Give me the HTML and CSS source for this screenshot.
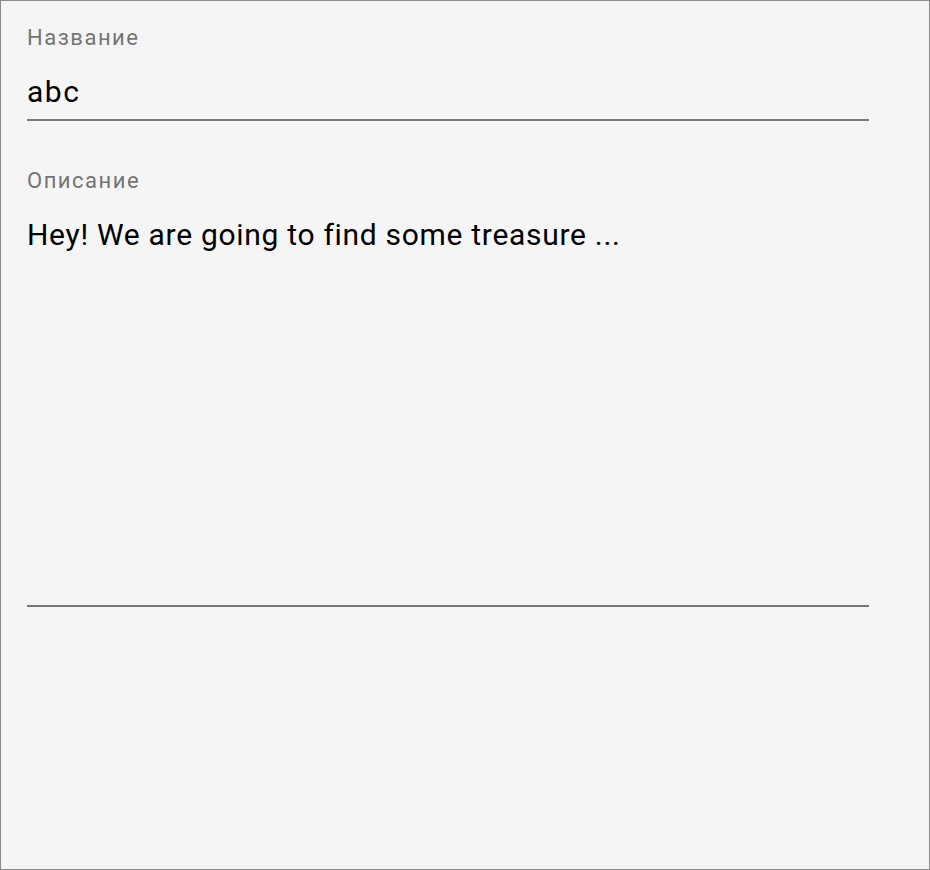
FILE: index.html
```html
<!DOCTYPE html>
<html lang="ru">
<head>
<meta charset="utf-8">
<title>Form</title>
<link rel="stylesheet" href="styles.css">
</head>
<body>
<div class="frame">
  <div class="field field-title">
    <div class="label">Название</div>
    <div class="value single">abc</div>
  </div>
  <div class="field field-desc">
    <div class="label">Описание</div>
    <div class="value multi">Hey! We are going to find some treasure ...</div>
  </div>
</div>
</body>
</html>
```

FILE: styles.css
```css
html, body {
  margin: 0;
  padding: 0;
  background: #f5f5f5;
}
.frame {
  box-sizing: border-box;
  width: 930px;
  height: 870px;
  border: 1px solid #8a8a8a;
  background: #f5f5f5;
  padding: 24px 60px 0 26px;
  font-family: Roboto, "Noto Sans", sans-serif;
}
.field {
  display: flex;
  flex-direction: column;
}
.label {
  font-size: 22px;
  line-height: 26px;
  letter-spacing: 1.5px;
  color: #747474;
}
.value {
  font-size: 30px;
  line-height: 36px;
  letter-spacing: 0.7px;
  color: #000;
  border-bottom: 2px solid #777777;
}
.single {
  margin-top: 23px;
  padding-bottom: 9px;
  letter-spacing: 1.5px;
}
.field-desc {
  margin-top: 47px;
}
.multi {
  margin-top: 23px;
  height: 388px;
}
```
